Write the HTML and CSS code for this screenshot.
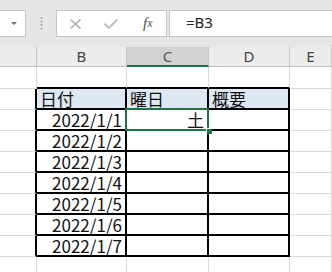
FILE: index.html
```html
<!DOCTYPE html><html lang="ja"><head><meta charset="utf-8"><meta name="viewport" content="width=device-width">
<title>曜日</title>
<link rel="stylesheet" href="styles.css">
</head>
<body>
<div class="bar">
  <div class="namebox"><span class="drop"></span></div>
  <svg class="grip" width="3" height="27" viewBox="0 0 3 27"><circle cx="1.5" cy="8" r="1"/><circle cx="1.5" cy="11.5" r="1"/><circle cx="1.5" cy="15" r="1"/><circle cx="1.5" cy="18.5" r="1"/></svg>
  <div class="fxbox">
    <span class="btn"><svg width="11" height="10" viewBox="0 0 11 10"><path d="M0.5 0.5L10.5 9.5M10.5 0.5L0.5 9.5"/></svg></span>
    <span class="btn"><svg width="14" height="10" viewBox="0 0 14 10"><path d="M0.5 4.5L4.8 9L13.5 0.5"/></svg></span>
    <span class="btn fx">f<small>x</small></span>
  </div>
  <div class="formula">=B3</div>
</div>

<div class="sheet">
  <div class="hd"></div>
  <div class="hd">B</div>
  <div class="hd sel">C</div>
  <div class="hd">D</div>
  <div class="hd">E</div>

  <div class="c"></div><div class="c eb"></div><div class="c eb"></div><div class="c eb"></div><div class="c"></div>

  <div class="c er"></div>
  <div class="c t th">日付</div>
  <div class="c t th">曜日</div>
  <div class="c t th">概要</div>
  <div class="c"></div>

  <div class="c er"></div><div class="c t num">2022/1/1</div><div class="c t num cur">土<span class="handle"></span></div><div class="c t"></div><div class="c"></div>
  <div class="c er"></div><div class="c t num">2022/1/2</div><div class="c t"></div><div class="c t"></div><div class="c"></div>
  <div class="c er"></div><div class="c t num">2022/1/3</div><div class="c t"></div><div class="c t"></div><div class="c"></div>
  <div class="c er"></div><div class="c t num">2022/1/4</div><div class="c t"></div><div class="c t"></div><div class="c"></div>
  <div class="c er"></div><div class="c t num">2022/1/5</div><div class="c t"></div><div class="c t"></div><div class="c"></div>
  <div class="c er"></div><div class="c t num">2022/1/6</div><div class="c t"></div><div class="c t"></div><div class="c"></div>
  <div class="c er"></div><div class="c t num">2022/1/7</div><div class="c t"></div><div class="c t"></div><div class="c"></div>

  <div class="c"></div><div class="c"></div><div class="c"></div><div class="c"></div><div class="c"></div>
</div>
</body>
</html>
```

FILE: styles.css
```css
body {
  margin: 0;
  width: 332px;
  height: 272px;
  overflow: hidden;
  background: #fff;
  font-family: "Noto Sans", sans-serif;
}
.bar {
  display: flex;
  align-items: flex-start;
  height: 47px;
  padding-top: 10px;
  box-sizing: border-box;
  background: #e6e6e6;
}
.namebox {
  width: 27px;
  height: 27px;
  margin-left: -1px;
  box-sizing: border-box;
  border: 1px solid #c6c6c6;
  background: #fff;
  display: flex;
  align-items: center;
  justify-content: flex-end;
  padding-right: 8px;
}
.drop {
  width: 0;
  height: 0;
  border-left: 3px solid transparent;
  border-right: 3px solid transparent;
  border-top: 3px solid #707070;
}
.grip {
  margin-left: 14px;
  fill: #a0a0a0;
}
.fxbox {
  display: flex;
  width: 111px;
  height: 27px;
  margin-left: 13px;
  box-sizing: border-box;
  border: 1px solid #c6c6c6;
  background: #fff;
}
.btn {
  flex: 1;
  display: flex;
  align-items: center;
  justify-content: center;
}
.btn svg {
  fill: none;
  stroke: #b4b4b4;
  stroke-width: 1.6;
}
.fx {
  font-family: "Liberation Serif", serif;
  font-style: italic;
  font-size: 15px;
  color: #505050;
  padding-bottom: 1px;
}
.fx small {
  font-size: 12px;
}
.formula {
  flex: 1;
  height: 27px;
  margin-left: 2px;
  margin-right: -2px;
  box-sizing: border-box;
  border: 1px solid #c6c6c6;
  background: #fff;
  padding-left: 16px;
  font-size: 15px;
  line-height: 22px;
  color: #222;
}
.sheet {
  display: grid;
  grid-template-columns: 37px 90px 82px 81px 1fr;
  grid-template-rows: 20px 22px repeat(9, 21px);
}
.hd {
  box-sizing: border-box;
  background: #ececec;
  border-right: 1px solid #c6c6c6;
  border-bottom: 1px solid #bdbdbd;
  text-align: center;
  font-size: 15px;
  line-height: 19px;
  color: #444;
}
.hd.sel {
  background: #d2d2d2;
  border-bottom: 2px solid #217346;
  color: #555;
}
.c {
  box-sizing: border-box;
  border-right: 1px solid #d9d9d9;
  border-bottom: 1px solid #d9d9d9;
  font-family: "Noto Sans CJK JP", sans-serif;
  font-size: 17px;
  line-height: 19px;
  color: #111;
  padding: 0 3px;
  white-space: nowrap;
}
.t {
  border-right: 2px solid #000;
  border-bottom: 2px solid #000;
}
.er {
  border-right: 2px solid #000;
}
.eb {
  border-bottom: 2px solid #000;
}
.th {
  background: #dde8f3;
}
.num {
  text-align: right;
}
.cur {
  position: relative;
}
.cur::before {
  content: "";
  position: absolute;
  left: -2px;
  top: -2px;
  right: -2px;
  bottom: -2px;
  border: 2px solid #217346;
}
.handle {
  position: absolute;
  right: -5px;
  bottom: -5px;
  width: 5px;
  height: 5px;
  background: #217346;
  border-left: 1px solid #fff;
  border-top: 1px solid #fff;
}
```
